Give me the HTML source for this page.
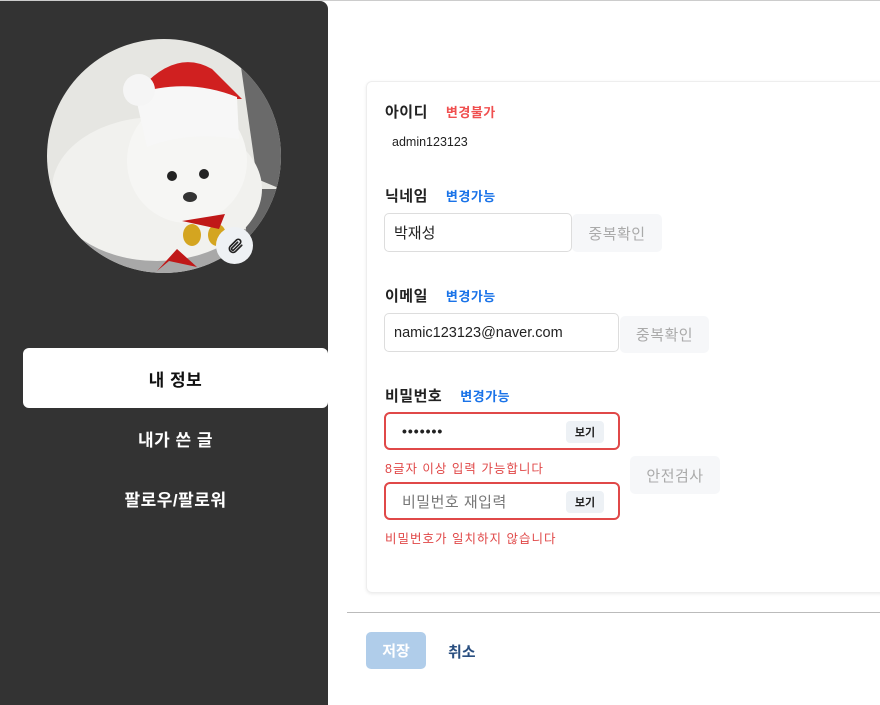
<!DOCTYPE html>
<html><head><meta charset="utf-8"><style>
*{margin:0;padding:0;box-sizing:border-box}
body{width:880px;height:705px;overflow:hidden;background:#fff;font-family:"Liberation Sans","Noto Sans CJK KR",sans-serif;position:relative;color:#222}
.top{position:absolute;left:0;top:0;width:880px;height:1px;background:#ccc}
.side{position:absolute;left:0;top:1px;width:328px;height:704px;background:#333;border-radius:0 8px 0 0}
.av{position:absolute;left:47px;top:39px;width:234px;height:234px;border-radius:50%;overflow:hidden}
.clip{position:absolute;left:216px;top:227px;width:37px;height:37px;border-radius:50%;background:#eef1f4;display:flex;align-items:center;justify-content:center}
.menu{position:absolute;left:23px;width:305px;height:60px;display:flex;align-items:center;justify-content:center;font-size:17px;font-weight:bold;color:#fff;letter-spacing:.5px}
.menu.on{background:#fff;color:#111;border-radius:6px;top:348px}
.card{position:absolute;left:366px;top:81px;width:530px;height:512px;border:1px solid #eee;border-radius:6px;box-shadow:0 1px 3px rgba(0,0,0,.08)}
.lbl{position:absolute;left:385px;font-size:15px;font-weight:bold;color:#222;letter-spacing:.5px}
.lbl span{font-size:13px;margin-left:18px}
.red{color:#f05050}.blue{color:#1a73e8}
.inp{position:absolute;left:384px;height:39px;border:1px solid #ddd;border-radius:5px;font-size:15px;padding-left:9px;display:flex;align-items:center;color:#222}
.btn{position:absolute;background:#f6f7f9;border-radius:5px;color:#aaa;font-size:15px;display:flex;align-items:center;justify-content:center;letter-spacing:.5px}
.pw{position:absolute;left:384px;width:236px;height:38px;border:2px solid #e04848;border-radius:6px;display:flex;align-items:center;font-size:15px}
.see{position:absolute;right:14px;top:7px;width:38px;height:22px;background:#edf1f5;border-radius:4px;font-size:11px;font-weight:bold;color:#222;display:flex;align-items:center;justify-content:center}
.err{position:absolute;left:385px;font-size:12.5px;color:#e04848;letter-spacing:1px}
</style></head><body>
<div class="top"></div>
<div class="side"></div>
<div class="av">
<svg width="234" height="234" viewBox="0 0 234 234">
<rect width="234" height="234" fill="#e6e6e2"/>
<rect x="0" y="190" width="234" height="50" fill="#a8a8a8"/>
<path d="M190 0 L234 40 L234 150 L210 140 Z" fill="#6a6a6a"/>
<path d="M195 150 L234 150 L234 200 L200 200 Z" fill="#666"/>
<ellipse cx="110" cy="150" rx="105" ry="72" fill="#f1f1ee"/>
<ellipse cx="140" cy="122" rx="60" ry="62" fill="#f6f6f4"/>
<circle cx="125" cy="137" r="5" fill="#222"/><circle cx="157" cy="135" r="5" fill="#222"/>
<ellipse cx="143" cy="158" rx="7" ry="5" fill="#333"/>
<path d="M95 48 Q130 10 165 30 L195 60 L170 60 Z" fill="#d02020"/>
<path d="M88 55 Q140 38 190 58 L192 100 Q140 92 100 108 Z" fill="#f7f7f7"/>
<circle cx="92" cy="51" r="16" fill="#f5f5f5"/>
<ellipse cx="145" cy="196" rx="9" ry="11" fill="#d4a520"/><ellipse cx="170" cy="196" rx="9" ry="11" fill="#d4a520"/>
<path d="M135 182 L178 175 L172 190 Z" fill="#c01818"/>
<path d="M110 232 L122 222 L150 228 L130 210 Z" fill="#c01818"/>
</svg>
</div>
<div class="clip"><svg width="18" height="18" viewBox="0 0 24 24" fill="none" stroke="#222" stroke-width="2.2" stroke-linecap="round"><path d="M21 11l-8.5 8.5a5 5 0 0 1-7-7L14 4a3.3 3.3 0 0 1 4.7 4.7L10.2 17.2a1.7 1.7 0 0 1-2.4-2.4L15.5 7"/></svg></div>
<div class="menu on">내 정보</div>
<div class="menu" style="top:408px">내가 쓴 글</div>
<div class="menu" style="top:468px">팔로우/팔로워</div>

<div class="card"></div>
<div class="lbl" style="top:101px">아이디<span class="red">변경불가</span></div>
<div style="position:absolute;left:392px;top:135px;font-size:12.5px">admin123123</div>
<div class="lbl" style="top:185px">닉네임<span class="blue">변경가능</span></div>
<div class="inp" style="top:213px;width:188px">박재성</div>
<div class="btn" style="left:572px;top:214px;width:90px;height:38px">중복확인</div>
<div class="lbl" style="top:285px">이메일<span class="blue">변경가능</span></div>
<div class="inp" style="top:313px;width:235px;font-size:14.5px">namic123123@naver.com</div>
<div class="btn" style="left:620px;top:316px;width:89px;height:37px">중복확인</div>
<div class="lbl" style="top:385px">비밀번호<span class="blue">변경가능</span></div>
<div class="pw" style="top:412px"><span style="margin-left:16px;font-size:14px;font-weight:bold;letter-spacing:1px">•••••••</span><div class="see">보기</div></div>
<div class="err" style="top:458px">8글자 이상 입력 가능합니다</div>
<div class="btn" style="left:630px;top:456px;width:90px;height:38px">안전검사</div>
<div class="pw" style="top:482px"><span style="margin-left:16px;color:#777;letter-spacing:.5px">비밀번호 재입력</span><div class="see">보기</div></div>
<div class="err" style="top:528px">비밀번호가 일치하지 않습니다</div>
<div style="position:absolute;left:347px;top:612px;width:533px;height:1px;background:#bbb"></div>
<div style="position:absolute;left:366px;top:632px;width:60px;height:37px;background:#b0cdea;border-radius:5px;color:#fff;font-weight:bold;font-size:15px;display:flex;align-items:center;justify-content:center">저장</div>
<div style="position:absolute;left:448px;top:641px;font-size:15px;font-weight:bold;color:#2a4f80">취소</div>
</body></html>
